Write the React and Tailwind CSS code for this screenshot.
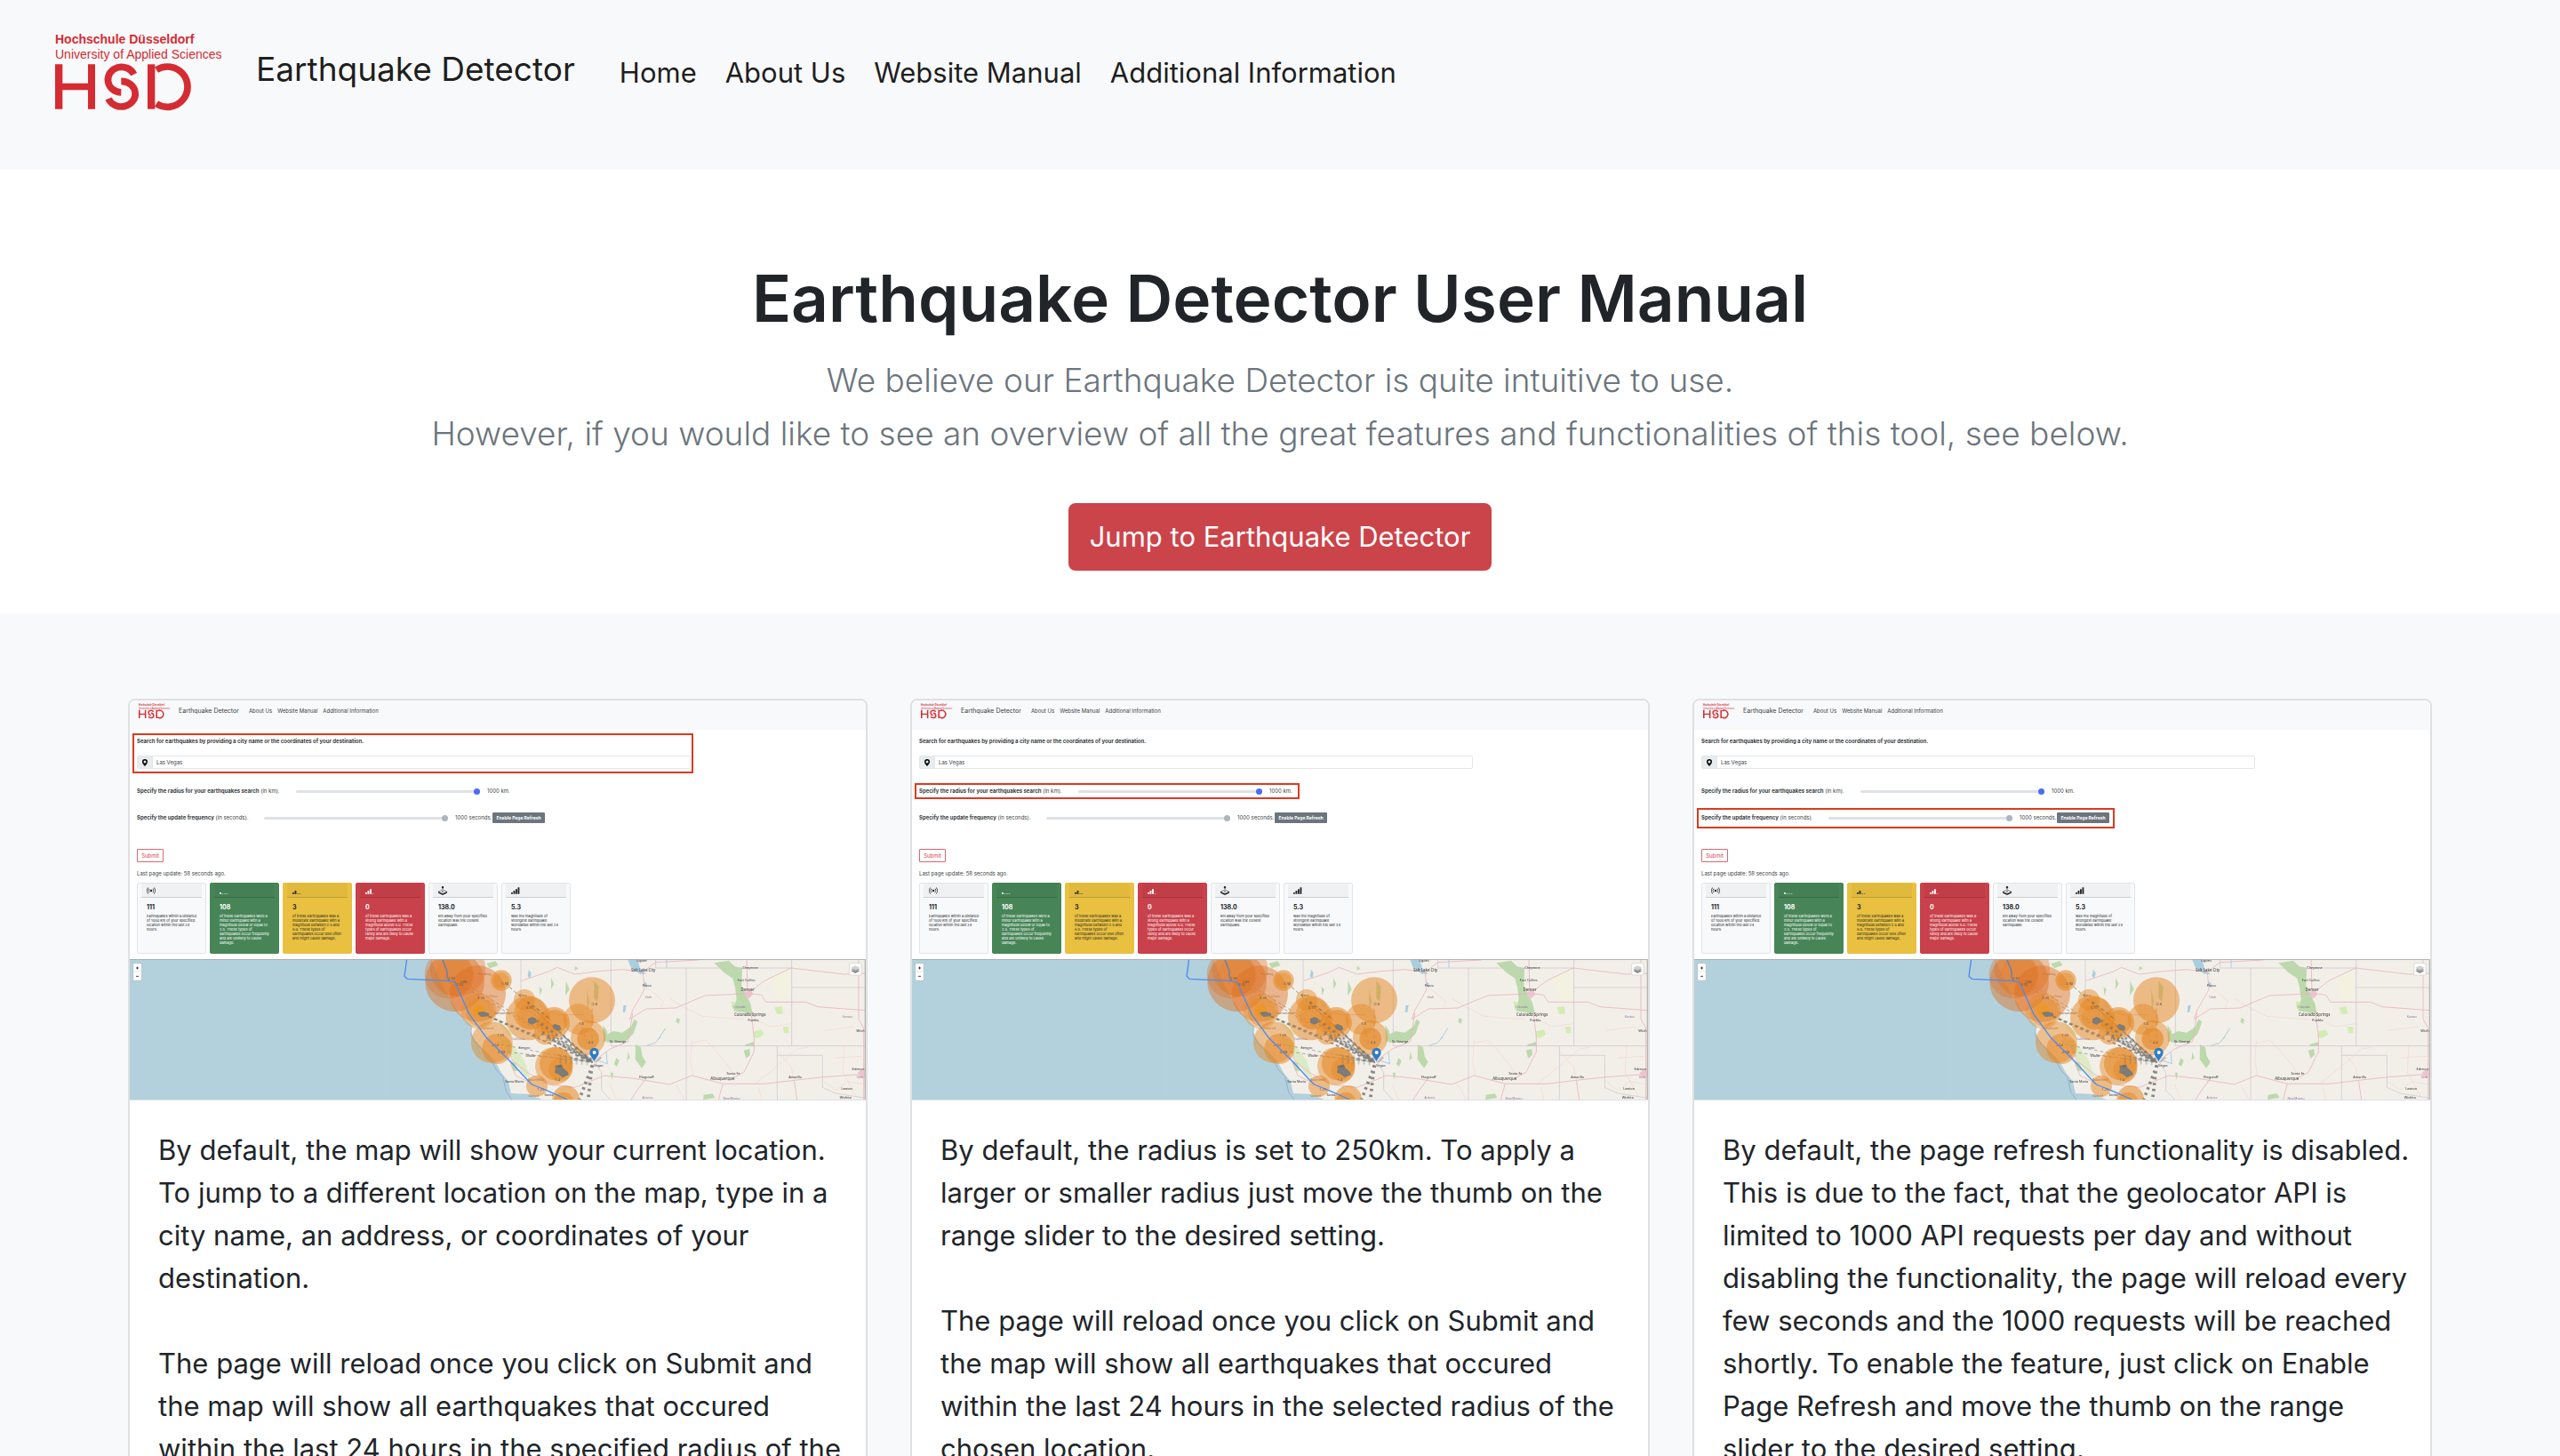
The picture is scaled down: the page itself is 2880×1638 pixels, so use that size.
import React from "react";
import {
  BsBroadcast,
  BsReception1,
  BsReception2,
  BsReception3,
  BsReception4,
  BsJoystick,
  BsGeoAltFill,
} from "react-icons/bs";

function Logo({ className }) {
  return (
    <svg viewBox="0 0 193 90" className={"overflow-visible " + className} role="img" aria-label="Hochschule Düsseldorf">
      <g fill="#d52b33" fontFamily="Liberation Sans, Arial, sans-serif" fontSize="14">
        <text x="0" y="12" fontWeight="700">Hochschule Düsseldorf</text>
        <text x="0" y="29">University of Applied Sciences</text>
      </g>
      <g transform="translate(-12 -7) scale(0.3333)" fill="#d52b33">
        <path d="M36 127h25v64h86v-64h24v151h-24v-64H61v64H36z" />
        <path d="M348 127h25v151h-25z" />
        <g fill="none" stroke="#d52b33" strokeWidth="23">
          <path d="M302 161A46 43 0 1 0 259 222" />
          <path d="M259 184A47 43 0 1 1 216 243" />
          <path d="M378 146A68 68 0 1 1 378 260" />
        </g>
      </g>
    </svg>
  );
}

const quakes = [
  [155, 134, 100, 0.45], [135, 108, 82, 0.35], [155, 115, 66, 0.3], [165, 90, 94, 0.35],
  [232, 174, 95, 0.45], [236, 232, 60, 0.35], [240, 236, 48, 0.4],
  [312, 129, 35, 0.55], [312, 129, 27, 0.4], [390, 194, 36, 0.45],
  [402, 256, 75, 0.5], [410, 240, 56, 0.45], [406, 252, 40, 0.3],
  [490, 272, 53, 0.55], [494, 268, 40, 0.5], [460, 308, 38, 0.5],
  [490, 418, 64, 0.45], [497, 410, 56, 0.55], [512, 430, 40, 0.4],
  [280, 338, 70, 0.45], [298, 360, 51, 0.5],
  [618, 196, 78, 0.5], [573, 260, 52, 0.45], [605, 322, 59, 0.45], [605, 326, 37, 0.6],
  [432, 485, 36, 0.5], [530, 530, 46, 0.55], [522, 540, 34, 0.5],
];

const rays = [
  [250, 243, 5], [160, 136, 2], [175, 130, 2], [325, 138, 3], [405, 212, 4],
  [415, 266, 5], [490, 286, 6], [470, 322, 6],
  [315, 368, 2], [310, 345, 2], [400, 380, 2], [500, 380, 4],
];

const roads =
  "M380 130L470 100L500 85L560 108L640 98L720 92L790 100L833 68L980 60M790 100L795 160L755 230L745 260L800 225L900 222L940 205L1000 180L1090 176L1145 172L1190 178L1205 202L1340 202L1380 218L1540 230" +
  "M625 400L680 360L740 335L755 240M1145 172L1200 130L1290 87L1400 100L1470 108L1540 105M1155 240L1165 320L1165 370L1130 440L1090 460M660 450L760 460L880 480L955 450L1060 478L1200 478L1300 466L1400 455L1540 445" +
  "M1518 57L1518 260L1535 290L1535 531M1300 466L1310 531M1060 478L1045 531M1140 57L1143 172M800 460L770 500L750 531M330 350L350 400L400 440L470 480L560 490L660 450M300 330L340 400L360 450L400 470M440 210L500 245L590 245";

const minorRoads =
  "M955 330L950 400L960 450M955 340L1000 330L1030 360L1080 420L1095 450M1165 260L1220 285L1290 275M880 190L930 220L990 250L1050 255L1130 260M1240 365L1290 420L1300 466M1345 355L1310 360L1240 420L1170 478M1400 470L1440 500L1480 470L1540 480M680 480L700 531M900 480L930 531M1180 490L1190 531M1400 298L1500 285M1440 390L1530 385M1470 345L1465 440L1510 520M800 150L860 200L850 220";

const greens =
  "M1030 70l50-8 20 20 25 5-2 60 15 30 15 30 8 40-30-10-35-5 10-40-5-40-8-30-30-20zM690 300l30 5 30-20 10-25 12 8-14 40-30 30-60 0-12-20zM765 345l18 10 5 30 12 20-14 20-22-30zM700 390l10 10-8 20-10-8zM740 370l6 20-10 10zM1135 345l28-8 4 14-32 0zM1130 365l20-5 2 20-14 12zM995 515l30-4 8 14-40 6zM625 130l16 20-4 50-12-10zM600 160l10 40-8 30zM655 280l14 20 2 30-14 8zM262 72l30-8 10 14-30 10zM530 130l12 30-14 20zM480 120l10 20-10 20zM560 80l12 8-12 8zM905 255l10 5-4 16-10-8zM680 440l10 0-4 24zM340 400l20 8 8 26-16 0zM440 150l10 10-8 20z";

const cities = [
  [786, 67, "Ogden"], [791, 98, "Salt Lake City", 13], [803, 151, "Provo"], [1152, 91, "Cheyenne"],
  [1139, 131, "Fort Collins"], [1143, 166, "Denver", 13], [1151, 249, "Colorado Springs", 13],
  [1162, 266, "Pueblo"], [705, 339, "St. George"], [802, 460, "Flagstaff", 12], [1095, 447, "Santa Fe"],
  [1058, 466, "Albuquerque", 13], [1304, 460, "Amarillo"], [1478, 497, "Lawton"], [1474, 527, "Wichita"],
  [1524, 302, "Wich", 12], [1516, 432, "Edmon", 12], [390, 361, "Fresno", 12], [356, 475, "Santa Maria"],
  [640, 419, "Vegas"], [410, 388, "Visalia", 10], [385, 182, "Reno"], [472, 520, "Santa"],
];

const regions = [
  [808, 188, "Utah"], [1115, 223, "Colorado"], [1480, 256, "Kansas"], [805, 529, "Arizona"],
  [1089, 530, "New Mexico"], [1522, 460, "Okla"], [370, 329, "California"],
];

const magnitudes = [
  [145, 126, "2.65"], [185, 137, "2.88"], [172, 148, "3.30"], [243, 193, "3.39"], [325, 143, "0.98"],
  [408, 224, "0.97"], [403, 211, "2"], [310, 318, "1.59"], [291, 350, "2.54"], [312, 376, "0.84"],
  [628, 214, "2.8"], [582, 278, "1.8"], [614, 341, "4.3"], [503, 424, "2.98"], [502, 467, "1.4"],
  [445, 502, "1.29"], [470, 334, "2.5"],
];

function QuakeMap() {
  return (
    <svg
      viewBox="-942 57 2484 474"
      preserveAspectRatio="xMidYMid slice"
      className="block h-[158px] w-full bg-[#b2d1dd]"
      role="img"
      aria-label="Map of earthquakes around Las Vegas"
    >
      <path d="M75 57L92 100L120 160L165 235L215 285L208 300L222 330L262 372L290 400L312 440L335 468L345 510L400 512L450 531H1542V57z" fill="#f2efe9" />
      <path d="M210 290l0 25 20 30 40 40 25 45 22 25 12 50 18 26" fill="none" stroke="#8f9cc0" strokeWidth="2" />
      <path d="M-660 57V531M-366 57V531M-80 57V531" stroke="#bcd8e3" strokeWidth="1" />
      <path d="M300 320l40 60 50 70 20 10-20-60-50-70zM280 240l60 80 10-10z" fill="#dcebc4" />
      <path d="M1165 300l25-5 8 16-22 14-14-6zM1235 220l24-4 4 26-22 0zM1262 285l20 0 0 22-16 0zM1088 200l50 6 14 16-60 4z" fill="#d3ecb4" />
      <path d="M1215 120l70-30 5 90-40 20z" fill="#f3f3da" opacity=".6" />
      <path d={greens} fill="#bcd9ac" />
      <path d="M738 57l34 0 8 30 20 20-20 0-30-20zM792 132l10 6 2 14-8-2zM724 214l10-2-4 24-8 0zM405 92l8 12-4 20-8-10z" fill="#a9cfdf" />
      <path d="M800 350l30-10 20-20M840 330l20-30 6-10M870 57l0 30M640 400l30 10-4-40" fill="none" stroke="#a9cfdf" strokeWidth="3" />
      <path
        d="M378 57V210M682 57V350M833 57V87H1292M936 87V531M682 350H1542M1292 57V350M1292 153H1542M1243 350V531M1243 382H1396V490L1440 510L1542 526M625 400L650 440L650 500L680 531M380 210L625 400"
        fill="none" stroke="#cfc5d0" strokeWidth="3" opacity=".75"
      />
      <path d={roads} fill="none" stroke="#e9b3bd" strokeWidth="2.5" strokeLinejoin="round" />
      <path d={minorRoads} fill="none" stroke="#f3cfc4" strokeWidth="1.6" strokeLinejoin="round" />
      <path d="M1134 168l20-6 8 14-14 14-12-6zM1514 440l20-14 8 0 0 34-16-4zM1150 240l12 2 0 10z" fill="#efc3cd" />
      <g fontFamily="Noto Sans, sans-serif" textAnchor="middle">
        {cities.map(([x, y, name, size]) => (
          <text key={name} x={x} y={y} fontSize={size || 11} fill="#4a4a4a" fontWeight="500">{name}</text>
        ))}
        {regions.map(([x, y, name]) => (
          <text key={name} x={x} y={y} fontSize="10" fill="#8d6f99">{name}</text>
        ))}
        <text x="256" y="110" fontSize="11" fill="#a0705a">Redding</text>
        <text x="285" y="186" fontSize="11" fill="#a0705a">Chico</text>
        <text x="318" y="243" fontSize="11" fill="#80604a">Sacramento</text>
        <text x="264" y="293" fontSize="11" fill="#a0705a">Oakland</text>
        <text x="428" y="468" fontSize="10" fill="#80604a">Bakersfield</text>
        <text x="421" y="522" fontSize="10" fill="#80604a">Oxnard</text>
      </g>
      <g fill="none" stroke="#666" opacity=".75">
        {rays.map(([x, y, w], i) => (
          <path key={i} d={`M${x} ${y}L620 405`} strokeWidth={w} strokeDasharray="11 9" />
        ))}
        <path d="M618 415L605 531M620 415L575 531" strokeWidth="11" strokeDasharray="8 12" />
        <path d="M618 390V200M600 340L580 275" strokeWidth="2" strokeDasharray="12 10" />
      </g>
      {quakes.map(([x, y, r, o], i) => (
        <circle key={i} cx={x} cy={y} r={r} fill={r > 80 ? "#dd6f22" : "#e58620"} opacity={o} />
      ))}
      <circle cx="236" cy="232" r="20" fill="#f0961d" opacity=".8" />
      <g fill="#7d7c78">
        <path d="M232 236l20-2 18 6 0 10-26 2-10-8zM402 258l14-6 14 6-2 14-14 6-12-6zM484 280l10-4 16 6 4 12-10 6-16-8zM496 418l20-6 4 12 16 14 4 10-22 8-12-10-14-6z" />
      </g>
      <g stroke="#74736f" opacity=".8" fill="none">
        <path d="M430 264L620 400" strokeWidth="9" strokeDasharray="8 12" />
        <path d="M450 306L620 405" strokeWidth="14" strokeDasharray="7 13" />
        <path d="M510 395L610 400" strokeWidth="30" strokeDasharray="4 14" opacity=".6" />
        <path d="M270 250L440 320M400 200L480 262" strokeWidth="4" strokeDasharray="11 9" />
      </g>
      <g fontFamily="Noto Sans, sans-serif" fontSize="12" fill="#6b5a4a" textAnchor="middle">
        {magnitudes.map(([x, y, m]) => <text key={m + x} x={x} y={y}>{m}</text>)}
      </g>
      <g fill="none" stroke="#4c8bf0" strokeWidth="4" strokeLinejoin="round">
        <path d="M-7 57L-15 115L-5 124L130 130L155 134L205 245L260 320L345 405L400 465L415 480L470 502L535 531" />
        <path d="M113 57L128 95L130 120L137 132" stroke="#5a82b8" />
      </g>
      <path d="M627 404l20-18 4 4-18 16z" fill="#000" opacity=".25" />
      <path d="M625 403c-3-12-15-18-15-31a15 15 0 0 1 31 0c0 13-12 19-16 31z" fill="#2f7cc4" />
      <circle cx="626" cy="372" r="6" fill="#fff" />
      <rect x="-931" y="71" width="29" height="59" rx="4" fill="#fff" stroke="#a9b6bb" strokeWidth="2" />
      <path d="M-931 99h29" stroke="#ccc" strokeWidth="1.5" />
      <path d="M-921 87h9M-916.500 82.500v9M-921 115h9" stroke="#222" strokeWidth="2.500" />
      <rect x="1487" y="71" width="40" height="40" rx="4" fill="#fff" stroke="#cfccc8" strokeWidth="2" />
      <path d="M1492 97l15-7 15 7-15 8z" fill="#8a8a8a" />
      <path d="M1492 91l15-7 15 7-15 8z" fill="#a8a8a8" />
      <path d="M1492 86l15-7 15 7-15 8z" fill="#d0d0d0" />
      <path d="M-942 58H1542" stroke="#a4a8a8" strokeWidth="3" />
      <path d="M1540 57V531" stroke="#b8b6b2" strokeWidth="4" />
    </svg>
  );
}

const tiles = [
  { Icon: BsBroadcast, value: "111", tone: "light", lines: ["Earthquakes within a distance", "of 1000 km of your specified", "location within the last 24", "hours."] },
  { Icon: BsReception1, value: "108", tone: "green", lines: ["of these earthquakes were a", "minor earthquake with a", "magnitude below or equal to", "2.5. These types of", "earthquakes occur frequently", "and are unlikely to cause", "damage."] },
  { Icon: BsReception2, value: "3", tone: "yellow", lines: ["of these earthquakes was a", "moderate earthquake with a", "magnitude between 2.5 and", "6.0. These types of", "earthquakes occur less often", "and might cause damage."] },
  { Icon: BsReception3, value: "0", tone: "red", lines: ["of these earthquakes was a", "strong earthquake with a", "magnitude above 6.0. These", "types of earthquakes occur", "rarely and are likely to cause", "major damage."] },
  { Icon: BsJoystick, value: "138.0", tone: "light", lines: ["km away from your specified", "location was the closest", "earthquake."] },
  { Icon: BsReception4, value: "5.3", tone: "light", lines: ["was the magnitude of", "strongest earthquake", "worldwide within the last 24", "hours."] },
];

const tones = {
  light: "bg-[#f8f9fa] border-[#e3e4e6] text-[#212529]",
  green: "bg-[#478557] border-[#478557] text-white",
  yellow: "bg-[#e9c03f] border-[#e9c03f] text-[#212529]",
  red: "bg-[#c9414a] border-[#c9414a] text-white",
};

const highlights = {
  search: "left-[3px] top-[37px] h-[45px] w-[631px]",
  radius: "left-[3px] top-[93px] h-[18px] w-[433px]",
  refresh: "left-[3px] top-[121px] h-[23px] w-[470px]",
};

function Range({ id, disabled }) {
  const thumb = disabled
    ? "[&::-webkit-slider-thumb]:bg-[#adb5bd]"
    : "[&::-webkit-slider-thumb]:bg-[#4a6cf7]";
  return (
    <input
      id={id}
      type="range"
      min="0"
      max="1000"
      defaultValue="1000"
      disabled={disabled}
      className={
        "h-[3px] w-[207px] appearance-none rounded-full bg-[#dee2e6] [&::-webkit-slider-thumb]:size-[7px] [&::-webkit-slider-thumb]:appearance-none [&::-webkit-slider-thumb]:rounded-full " +
        thumb
      }
    />
  );
}

function AppPreview({ highlight }) {
  return (
    <div className="relative overflow-hidden rounded-t-md bg-white text-[6px] leading-[8px] text-[#3a3f44]">
      <div className="flex h-[33px] items-start bg-[#f8f9fa] pt-1 pl-[10px]">
        <Logo className="h-[17px] w-[36px]" />
        <span className="ml-[9px] pt-1 text-[7px]">Earthquake Detector</span>
        <ul className="ml-[11px] flex gap-[6px] pt-1">
          <li>About Us</li>
          <li>Website Manual</li>
          <li>Additional Information</li>
        </ul>
      </div>
      <div className="flex flex-col items-start pl-2">
        <label htmlFor={highlight + "-place"} className="mt-[9px] font-bold">
          Search for earthquakes by providing a city name or the coordinates of your destination.
        </label>
        <div className="mt-3 flex h-[15px] w-[76%] rounded-xs border border-[#e4e6e9]">
          <span className="flex w-[17px] items-center justify-center border-r border-[#e4e6e9] bg-[#e9ecef]">
            <BsGeoAltFill className="size-[8px] text-black" />
          </span>
          <input id={highlight + "-place"} defaultValue="Las Vegas" className="min-w-0 flex-1 px-1" />
        </div>
        <div className="mt-[21px] flex h-[8px] items-center">
          <label htmlFor={highlight + "-radius"} className="w-[179px]">
            <b>Specify the radius for your earthquakes search</b> (in km).
          </label>
          <Range id={highlight + "-radius"} />
          <span className="ml-2">1000 km.</span>
        </div>
        <div className="mt-[20px] flex h-[12px] items-center">
          <label htmlFor={highlight + "-rate"} className="w-[143px]">
            <b>Specify the update frequency</b> (in seconds).
          </label>
          <Range id={highlight + "-rate"} disabled />
          <span className="ml-2 w-[42px] whitespace-nowrap">1000 seconds.</span>
          <button className="h-[12px] w-[59px] rounded-[1px] bg-[#6c757d] text-[5px] leading-[8px] font-bold whitespace-nowrap text-white">
            Enable Page Refresh
          </button>
        </div>
        <button className="mt-[29px] h-[15px] w-[30px] rounded-[1px] border border-[#dc6670] text-[#d0434f]">
          Submit
        </button>
        <p className="mt-[9px]">Last page update: 58 seconds ago.</p>
        <ul className="mt-[6px] grid h-[80px] grid-cols-6 gap-1">
          {tiles.map(({ Icon, value, tone, lines }) => (
            <li key={value} className={"w-[78px] rounded-[2px] border px-1 " + tones[tone]}>
              <div className="h-[16px] border-b border-black/15 bg-black/3 pt-[3px] pl-[6px]">
                <Icon className="size-[10px]" />
              </div>
              <p className="mt-[7px] pl-[6px] text-[7px] leading-[8px] font-bold">{value}</p>
              <p className="mt-[3px] pl-[6px] text-[4px] leading-[5px] whitespace-nowrap">
                {lines.map((line) => (
                  <span key={line} className="block">{line}</span>
                ))}
              </p>
            </li>
          ))}
        </ul>
      </div>
      <div className="mt-[6px] border-b border-[#dfe0e1]">
        <QuakeMap />
      </div>
      <div className={"pointer-events-none absolute border-2 border-[#dc3a1f] " + highlights[highlight]} />
    </div>
  );
}

const cards = [
  {
    highlight: "search",
    paragraphs: [
      "By default, the map will show your current location. To jump to a different location on the map, type in a city name, an address, or coordinates of your destination.",
      "The page will reload once you click on Submit and the map will show all earthquakes that occured within the last 24 hours in the specified radius of the chosen location.",
    ],
  },
  {
    highlight: "radius",
    paragraphs: [
      "By default, the radius is set to 250km. To apply a larger or smaller radius just move the thumb on the range slider to the desired setting.",
      "The page will reload once you click on Submit and the map will show all earthquakes that occured within the last 24 hours in the selected radius of the chosen location.",
    ],
  },
  {
    highlight: "refresh",
    paragraphs: [
      "By default, the page refresh functionality is disabled. This is due to the fact, that the geolocator API is limited to 1000 API requests per day and without disabling the functionality, the page will reload every few seconds and the 1000 requests will be reached shortly. To enable the feature, just click on Enable Page Refresh and move the thumb on the range slider to the desired setting.",
    ],
  },
];

const links = ["Home", "About Us", "Website Manual", "Additional Information"];

export default function App() {
  return (
    <div className="bg-white font-['Inter',sans-serif] text-[31px] leading-[48px] text-[#212529]">
      <header className="bg-[#f8f9fa] px-[62px] pt-9 pb-[62px]">
        <nav className="flex h-[92px] items-center">
          <Logo className="h-[90px] w-[193px]" />
          <a href="#top" className="ml-[33px] pb-2 text-[37px] text-black/90">Earthquake Detector</a>
          <ul className="ml-[50px] flex gap-8 text-black/90">
            {links.map((label) => (
              <li key={label}><a href="#top">{label}</a></li>
            ))}
          </ul>
        </nav>
      </header>

      <main>
        <section className="flex flex-col items-center px-6 pt-[98px] pb-12 text-center">
          <h1 className="text-[73px] leading-[96px] font-semibold">Earthquake Detector User Manual</h1>
          <p className="mt-[14px] text-[37px] leading-[60px] font-light text-[#6c757d]">
            We believe our Earthquake Detector is quite intuitive to use.
            <br />
            However, if you would like to see an overview of all the great features and functionalities of this tool, see below.
          </p>
          <a href="#top" className="mt-12 rounded-lg bg-[#cb444a] px-6 py-[14px] text-white">
            Jump to Earthquake Detector
          </a>
        </section>

        <section className="bg-[#f8f9fa] px-6 py-24">
          <div className="mx-auto grid max-w-[2592px] grid-cols-3 gap-12">
            {cards.map(({ highlight, paragraphs }) => (
              <article key={highlight} className="rounded-lg border-2 border-[#dfe0e1] bg-white">
                <AppPreview highlight={highlight} />
                <div className="flex flex-col gap-12 py-8 pr-4 pl-8">
                  {paragraphs.map((text) => (
                    <p key={text}>{text}</p>
                  ))}
                </div>
              </article>
            ))}
          </div>
        </section>
      </main>
    </div>
  );
}
